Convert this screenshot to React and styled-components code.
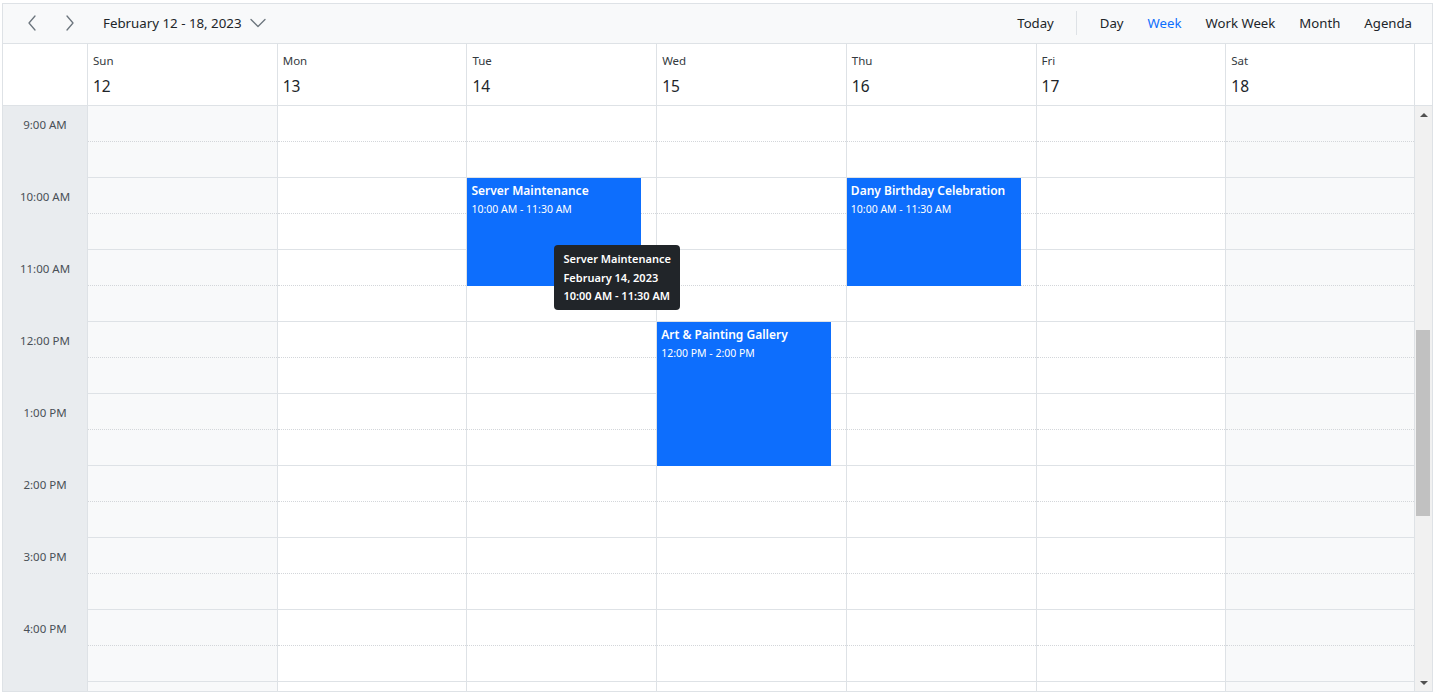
import React, { useLayoutEffect, useRef, useState } from 'react';
import styled, { createGlobalStyle } from 'styled-components';

const GlobalStyle = createGlobalStyle`
  html, body { margin: 0; padding: 0; background: #fff; }
  body { font-family: "Segoe UI", "Noto Sans", "Open Sans", sans-serif; color: #212529; }
  *, *::before, *::after { box-sizing: border-box; }
`;

const HOUR = 72;
const SCROLLBAR = 17;
const START_HOUR = 9;

const Page = styled.div`
  padding: 3px 2px 0 2px;
`;

const Scheduler = styled.div`
  width: 1431px;
  height: 689px;
  border: 1px solid #dee2e6;
  display: flex;
  flex-direction: column;
  background: #fff;
`;

const Toolbar = styled.div`
  height: 40px;
  flex: none;
  display: flex;
  align-items: center;
  padding: 0 8px 1px 10px;
  background: #f8f9fa;
  border-bottom: 1px solid #dee2e6;
`;

const NavButton = styled.button`
  width: 38px;
  height: 36px;
  border: 0;
  background: transparent;
  display: flex;
  align-items: center;
  justify-content: center;
  padding: 0;
  cursor: pointer;
`;

const DateButton = styled.button`
  border: 0;
  background: transparent;
  display: flex;
  align-items: center;
  gap: 8px;
  padding: 0 12px 0 14px;
  height: 36px;
  font-family: inherit;
  font-size: 13.3px;
  color: #212529;
  cursor: pointer;
`;

const RightGroup = styled.div`
  margin-left: auto;
  display: flex;
  align-items: center;
`;

const ViewButton = styled.button`
  border: 0;
  background: transparent;
  padding: 0 12px;
  height: 36px;
  font-family: inherit;
  font-size: 13.2px;
  color: ${(p) => (p.$active ? '#0d6efd' : '#212529')};
  cursor: pointer;
`;

const Separator = styled.div`
  width: 1px;
  height: 24px;
  background: #dee2e6;
  margin: 0 11px 0 10px;
`;

const HeaderRow = styled.div`
  height: 62px;
  flex: none;
  display: grid;
  grid-template-columns: 84px repeat(7, 1fr);
  padding-right: ${SCROLLBAR}px;
  border-bottom: 1px solid #dee2e6;
`;

const CornerCell = styled.div``;

const HeaderCell = styled.div`
  border-left: 1px solid #dee2e6;
  ${(p) => (p.$last ? 'border-right: 1px solid #dee2e6;' : '')}
  padding: 9px 5px 0 5px;
  display: flex;
  flex-direction: column;
  gap: 6px;
`;

const DayName = styled.div`
  font-size: 11.5px;
  line-height: 16px;
  color: #343a40;
`;

const DayNumber = styled.div`
  font-size: 15.5px;
  line-height: 22px;
  color: #212529;
`;

const BodyWrap = styled.div`
  flex: 1;
  min-height: 0;
  display: flex;
`;

const ScrollArea = styled.div`
  flex: 1;
  min-width: 0;
  overflow-y: scroll;
  overflow-x: hidden;
  scrollbar-width: none;
  &::-webkit-scrollbar {
    display: none;
  }
`;

const ScrollTrack = styled.div`
  width: ${SCROLLBAR}px;
  flex: none;
  background: #f1f1f1;
  display: flex;
  flex-direction: column;
`;

const ScrollButton = styled.div`
  height: 17px;
  flex: none;
  display: flex;
  align-items: center;
  justify-content: center;
`;

const Arrow = styled.div`
  width: 0;
  height: 0;
  border-left: 4px solid transparent;
  border-right: 4px solid transparent;
  ${(p) => (p.$up ? 'border-bottom: 4px solid #505050;' : 'border-top: 4px solid #505050;')}
`;

const ThumbTrack = styled.div`
  flex: 1;
  position: relative;
`;

const Thumb = styled.div`
  position: absolute;
  left: 1px;
  width: 14px;
  background: #c1c1c1;
`;

const Grid = styled.div`
  display: grid;
  grid-template-columns: 84px repeat(7, 1fr);
`;

const TimeColumn = styled.div`
  background: #e9ecef;
`;

const TimeCell = styled.div`
  height: ${HOUR}px;
`;

const TimeLabel = styled.div`
  height: ${HOUR / 2}px;
  display: flex;
  align-items: center;
  justify-content: center;
  font-size: 11.5px;
  color: #495057;
`;

const DayColumn = styled.div`
  position: relative;
  border-left: 1px solid #dee2e6;
  ${(p) => (p.$last ? 'border-right: 1px solid #dee2e6;' : '')}
  background: ${(p) => (p.$weekend ? '#f8f9fa' : '#fff')};
`;

const HalfSlot = styled.div`
  height: ${HOUR / 2}px;
  border-bottom: 1px ${(p) => (p.$half ? 'dotted #d3d6da' : 'solid #dee2e6')};
`;

const Event = styled.div`
  position: absolute;
  left: 0;
  width: calc(100% - 15px);
  background: #0d6efd;
  color: #fff;
  padding: 4px 4px;
  overflow: hidden;
  z-index: 1;
`;

const EventTitle = styled.div`
  font-size: 12px;
  font-weight: 600;
  line-height: 18px;
  white-space: nowrap;
`;

const EventTime = styled.div`
  margin-top: 1px;
  font-size: 10.5px;
  line-height: 16px;
  white-space: nowrap;
`;

const Tooltip = styled.div`
  position: absolute;
  z-index: 10;
  background: #212529;
  color: #fff;
  border-radius: 4px;
  padding: 5px 9px 4px 9px;
  font-size: 11px;
  font-weight: 600;
  line-height: 18.5px;
  white-space: nowrap;
`;

const Chevron = ({ dir }) => (
  <svg width="10" height="16" viewBox="0 0 10 16" fill="none">
    <polyline
      points={dir === 'left' ? '8,1 2,8 8,15' : '2,1 8,8 2,15'}
      stroke="#6c757d"
      strokeWidth="1.3"
      strokeLinecap="round"
      strokeLinejoin="round"
    />
  </svg>
);

const ChevronDown = () => (
  <svg width="16" height="10" viewBox="0 0 16 10" fill="none">
    <polyline points="1,1.5 8,8.5 15,1.5" stroke="#6c757d" strokeWidth="1.3" strokeLinecap="round" strokeLinejoin="round" />
  </svg>
);

const days = [
  { name: 'Sun', num: 12, weekend: true },
  { name: 'Mon', num: 13 },
  { name: 'Tue', num: 14 },
  { name: 'Wed', num: 15 },
  { name: 'Thu', num: 16 },
  { name: 'Fri', num: 17 },
  { name: 'Sat', num: 18, weekend: true },
];

const events = [
  { day: 2, title: 'Server Maintenance', start: 10, end: 11.5, time: '10:00 AM - 11:30 AM' },
  { day: 4, title: 'Dany Birthday Celebration', start: 10, end: 11.5, time: '10:00 AM - 11:30 AM' },
  { day: 3, title: 'Art & Painting Gallery', start: 12, end: 14, time: '12:00 PM - 2:00 PM' },
];

const hours = Array.from({ length: 24 }, (_, i) => i);
const hourLabel = (h) => {
  const suffix = h < 12 ? 'AM' : 'PM';
  const v = h % 12 === 0 ? 12 : h % 12;
  return `${v}:00 ${suffix}`;
};

export default function App() {
  const bodyRef = useRef(null);
  const trackRef = useRef(null);
  const [thumb, setThumb] = useState({ top: 0, height: 0 });

  useLayoutEffect(() => {
    const el = bodyRef.current;
    const track = trackRef.current;
    if (!el || !track) return;
    const update = () => {
      const th = track.clientHeight;
      const ratio = el.clientHeight / el.scrollHeight;
      setThumb({
        top: (el.scrollTop / el.scrollHeight) * th,
        height: ratio * th,
      });
    };
    el.scrollTop = START_HOUR * HOUR;
    update();
    el.addEventListener('scroll', update);
    return () => el.removeEventListener('scroll', update);
  }, []);

  return (
    <>
      <GlobalStyle />
      <Page>
        <Scheduler>
          <Toolbar>
            <NavButton aria-label="Previous">
              <Chevron dir="left" />
            </NavButton>
            <NavButton aria-label="Next">
              <Chevron dir="right" />
            </NavButton>
            <DateButton>
              February 12 - 18, 2023
              <ChevronDown />
            </DateButton>
            <RightGroup>
              <ViewButton>Today</ViewButton>
              <Separator />
              <ViewButton>Day</ViewButton>
              <ViewButton $active>Week</ViewButton>
              <ViewButton>Work Week</ViewButton>
              <ViewButton>Month</ViewButton>
              <ViewButton>Agenda</ViewButton>
            </RightGroup>
          </Toolbar>
          <HeaderRow>
            <CornerCell />
            {days.map((d, i) => (
              <HeaderCell key={d.name} $last={i === 6}>
                <DayName>{d.name}</DayName>
                <DayNumber>{d.num}</DayNumber>
              </HeaderCell>
            ))}
          </HeaderRow>
          <BodyWrap>
            <ScrollArea ref={bodyRef}>
              <Grid>
                <TimeColumn>
                  {hours.map((h) => (
                    <TimeCell key={h}>
                      <TimeLabel>{hourLabel(h)}</TimeLabel>
                    </TimeCell>
                  ))}
                </TimeColumn>
                {days.map((d, di) => (
                  <DayColumn key={d.name} $weekend={d.weekend} $last={di === 6}>
                    {hours.map((h) => (
                      <React.Fragment key={h}>
                        <HalfSlot $half />
                        <HalfSlot />
                      </React.Fragment>
                    ))}
                    {events
                      .filter((e) => e.day === di)
                      .map((e) => (
                        <Event
                          key={e.title}
                          style={{ top: e.start * HOUR, height: (e.end - e.start) * HOUR }}
                        >
                          <EventTitle>{e.title}</EventTitle>
                          <EventTime>{e.time}</EventTime>
                        </Event>
                      ))}
                    {di === 2 && (
                      <Tooltip style={{ left: 87, top: 11 * HOUR - 5 }}>
                        <div>Server Maintenance</div>
                        <div>February 14, 2023</div>
                        <div>10:00 AM - 11:30 AM</div>
                      </Tooltip>
                    )}
                  </DayColumn>
                ))}
              </Grid>
            </ScrollArea>
            <ScrollTrack>
              <ScrollButton>
                <Arrow $up />
              </ScrollButton>
              <ThumbTrack ref={trackRef}>
                <Thumb style={{ top: thumb.top, height: thumb.height }} />
              </ThumbTrack>
              <ScrollButton>
                <Arrow />
              </ScrollButton>
            </ScrollTrack>
          </BodyWrap>
        </Scheduler>
      </Page>
    </>
  );
}
